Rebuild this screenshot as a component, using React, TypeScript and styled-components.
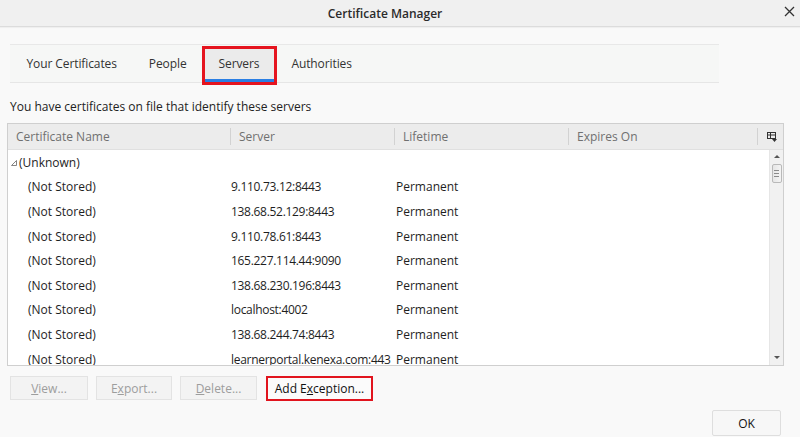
import React from "react";
import styled, { createGlobalStyle } from "styled-components";

const GlobalStyle = createGlobalStyle`
  html, body {
    margin: 0;
    padding: 0;
    background: #f9f9f9;
  }
  body {
    font-family: "Open Sans", "Noto Sans", sans-serif;
    font-size: 12px;
    color: #1a1a1a;
  }
`;

interface Row {
  server: string;
}

const rows: Row[] = [
  { server: "9.110.73.12:8443" },
  { server: "138.68.52.129:8443" },
  { server: "9.110.78.61:8443" },
  { server: "165.227.114.44:9090" },
  { server: "138.68.230.196:8443" },
  { server: "localhost:4002" },
  { server: "138.68.244.74:8443" },
  { server: "learnerportal.kenexa.com:443" },
];

const tabs = ["Your Certificates", "People", "Servers", "Authorities"];

const columns = [
  { label: "Certificate Name", width: 222 },
  { label: "Server", width: 164 },
  { label: "Lifetime", width: 174 },
  { label: "Expires On", width: 189 },
];

export default function App() {
  return (
    <>
      <GlobalStyle />
      <Window>
        <TitleBar>
          <Title>Certificate Manager</Title>
          <Close>
            <svg width="11" height="11" viewBox="0 0 11 11">
              <path d="M1 1 L10 10 M10 1 L1 10" stroke="#333" strokeWidth="1.3" />
            </svg>
          </Close>
        </TitleBar>

        <Body>
          <TabBar>
            {tabs.map((t) => (
              <Tab key={t} $active={t === "Servers"}>
                {t}
              </Tab>
            ))}
          </TabBar>

          <Description>You have certificates on file that identify these servers</Description>

          <Table>
            <Header>
              {columns.map((c, i) => (
                <HeadCell key={c.label} $width={c.width} $first={i === 0}>
                  {c.label}
                </HeadCell>
              ))}
              <PickerCell>
                <svg width="10" height="10" viewBox="0 0 10 10">
                  <rect x="0.5" y="0.5" width="8" height="6" fill="none" stroke="#333" />
                  <path d="M0.5 3 H8.5 M3.5 0.5 V6.5" stroke="#333" />
                  <path d="M5 7 H10 L7.5 10 Z" fill="#333" />
                </svg>
              </PickerCell>
            </Header>

            <BodyArea>
              <Rows>
                <DataRow>
                  <NameCell $indent={3}>
                    <Twisty>
                      <svg width="6" height="6" viewBox="0 0 6 6">
                        <path d="M5.5 0.5 V5.5 H0.5 Z" fill="none" stroke="#777" strokeWidth="0.9" />
                      </svg>
                    </Twisty>
                    (Unknown)
                  </NameCell>
                </DataRow>
                {rows.map((r) => (
                  <DataRow key={r.server}>
                    <NameCell $indent={20}>(Not Stored)</NameCell>
                    <ServerCell>{r.server}</ServerCell>
                    <LifeCell>Permanent</LifeCell>
                  </DataRow>
                ))}
              </Rows>

              <Scrollbar>
                <ArrowUp />
                <Thumb>
                  <Grip />
                  <Grip />
                  <Grip />
                </Thumb>
                <Track />
                <ArrowDown />
              </Scrollbar>
            </BodyArea>
          </Table>

          <ButtonRow>
            <Button disabled $width={78}>
              <u>V</u>iew...
            </Button>
            <Button disabled $width={76}>
              E<u>x</u>port...
            </Button>
            <Button disabled $width={77}>
              <u>D</u>elete...
            </Button>
            <HighlightButton>
              Add E<u>x</u>ception...
            </HighlightButton>
          </ButtonRow>

          <Footer>
            <OkButton>OK</OkButton>
          </Footer>
        </Body>
      </Window>
    </>
  );
}

const Window = styled.div`
  width: 800px;
  height: 437px;
  display: flex;
  flex-direction: column;
  overflow: hidden;
  background: #f9f9f9;
`;

const TitleBar = styled.div`
  height: 26px;
  flex: none;
  display: flex;
  align-items: center;
  justify-content: center;
  position: relative;
  background: #f0f0f0;
  border-bottom: 1px solid #dcdcdc;
  box-shadow: 0 1px 1px rgba(0, 0, 0, 0.04);
`;

const Title = styled.div`
  font-size: 12px;
  font-weight: 600;
  color: #2b2b2b;
  margin-left: -30px;
`;

const Close = styled.div`
  position: absolute;
  right: 5px;
  top: 6px;
  width: 11px;
  height: 11px;
  display: flex;
`;

const Body = styled.div`
  flex: 1;
  display: flex;
  flex-direction: column;
  padding: 17px 16px 0 7px;
`;

const TabBar = styled.div`
  margin-left: 3px;
  width: 705px;
  height: 36px;
  display: flex;
  align-items: stretch;
  gap: 3px;
  padding: 1px 2px 0;
  background: #f6f7f6;
  border-top: 1px solid #e8e8e8;
  border-bottom: 1px solid #e6e6e6;
`;

const Tab = styled.div<{ $active?: boolean }>`
  position: relative;
  display: flex;
  align-items: center;
  padding: 0 14.5px 1px;
  font-size: 12px;
  letter-spacing: -0.1px;
  color: #333;
  background: ${(p) => (p.$active ? "#ebebeb" : "transparent")};
  box-shadow: ${(p) => (p.$active ? "inset 0 -3px 0 #2a7ee3" : "none")};

  &::after {
    content: "";
    display: ${(p) => (p.$active ? "block" : "none")};
    position: absolute;
    left: -2px;
    right: -3px;
    top: 0;
    bottom: -3px;
    border: 3px solid #e5141f;
  }
`;

const Description = styled.div`
  margin: 15px 0 0 3px;
  height: 17px;
  line-height: 17px;
  font-size: 12px;
  color: #222;
`;

const Table = styled.div`
  margin-top: 8px;
  width: 775px;
  height: 241px;
  border: 1px solid #cfcfcf;
  background: #fff;
  display: flex;
  flex-direction: column;
`;

const Header = styled.div`
  height: 25px;
  flex: none;
  display: flex;
  background: #ececec;
  border-bottom: 1px solid #e0e0e0;
`;

const HeadCell = styled.div<{ $width: number; $first?: boolean }>`
  width: ${(p) => p.$width}px;
  flex: none;
  display: flex;
  align-items: center;
  padding-left: ${(p) => (p.$first ? 8 : 9)}px;
  box-sizing: border-box;
  color: #707070;
  font-size: 12px;
  position: relative;

  &::before {
    content: "";
    display: ${(p) => (p.$first ? "none" : "block")};
    position: absolute;
    left: 0;
    top: 4px;
    bottom: 4px;
    width: 1px;
    background: #d2d2d2;
  }
`;

const PickerCell = styled.div`
  flex: 1;
  display: flex;
  align-items: center;
  justify-content: center;
  position: relative;
  padding-left: 3px;

  &::before {
    content: "";
    position: absolute;
    left: 0;
    top: 4px;
    bottom: 4px;
    width: 1px;
    background: #d2d2d2;
  }
`;

const BodyArea = styled.div`
  flex: 1;
  display: flex;
  min-height: 0;
`;

const Rows = styled.div`
  flex: 1;
  overflow: hidden;
`;

const DataRow = styled.div`
  height: 24.6px;
  display: flex;
  align-items: center;
  font-size: 12px;
  color: #1e1e1e;
`;

const NameCell = styled.div<{ $indent: number }>`
  width: 222px;
  flex: none;
  box-sizing: border-box;
  padding-left: ${(p) => p.$indent}px;
  display: flex;
  align-items: center;
  white-space: nowrap;
  overflow: hidden;
`;

const Twisty = styled.span`
  display: inline-flex;
  margin-right: 2px;
  margin-top: 2px;
`;

const ServerCell = styled.div`
  width: 164px;
  flex: none;
  box-sizing: border-box;
  padding-left: 1px;
  letter-spacing: -0.3px;
  white-space: nowrap;
  overflow: hidden;
`;

const LifeCell = styled.div`
  width: 174px;
  flex: none;
  box-sizing: border-box;
  padding-left: 2px;
  white-space: nowrap;
`;

const Scrollbar = styled.div`
  width: 13px;
  flex: none;
  display: flex;
  flex-direction: column;
  align-items: center;
  background: #f1f1f1;
  border-left: 1px solid #e6e6e6;
`;

const ArrowUp = styled.div`
  margin-top: 5px;
  width: 0;
  height: 0;
  border-left: 3px solid transparent;
  border-right: 3px solid transparent;
  border-bottom: 3px solid #555;
`;

const ArrowDown = styled.div`
  margin-bottom: 6px;
  width: 0;
  height: 0;
  border-left: 3px solid transparent;
  border-right: 3px solid transparent;
  border-top: 3px solid #555;
`;

const Thumb = styled.div`
  margin-top: 6px;
  width: 10px;
  height: 19px;
  box-sizing: border-box;
  border: 1px solid #b9b9b9;
  border-radius: 2px;
  background: linear-gradient(to right, #e6e6e6, #f4f4f4);
  display: flex;
  flex-direction: column;
  align-items: center;
  justify-content: center;
  gap: 2px;
`;

const Grip = styled.div`
  width: 5px;
  height: 1px;
  background: #8a8a8a;
`;

const Track = styled.div`
  flex: 1;
`;

const ButtonRow = styled.div`
  margin-top: 10px;
  margin-left: 3px;
  display: flex;
  gap: 8px;
`;

const Button = styled.button<{ $width: number }>`
  width: ${(p) => p.$width}px;
  height: 24px;
  box-sizing: border-box;
  background: #f3f3f3;
  border: 1px solid #e3e3e3;
  font-family: inherit;
  font-size: 12px;
  color: #9d9d9d;
  padding: 0;
`;

const HighlightButton = styled.button`
  width: 107px;
  height: 25px;
  margin-left: 1px;
  box-sizing: border-box;
  background: #fbfbfb;
  border: 2px solid #e1141e;
  font-family: inherit;
  font-size: 12px;
  color: #111;
  padding: 0;
`;

const Footer = styled.div`
  margin-top: 9px;
  display: flex;
  justify-content: flex-end;
  padding-right: 3px;
`;

const OkButton = styled.button`
  width: 69px;
  height: 26px;
  box-sizing: border-box;
  background: #f7f7f7;
  border: 1px solid #dedede;
  border-radius: 2px;
  font-family: inherit;
  font-size: 12px;
  color: #111;
  padding: 0;
`;
